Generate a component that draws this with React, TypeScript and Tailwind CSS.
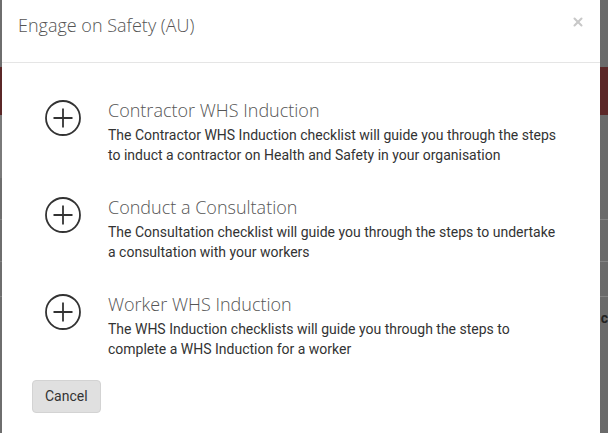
import { X } from "lucide-react";

const items = [
    {
        title: "Contractor WHS Induction",
        text: "The Contractor WHS Induction checklist will guide you through the steps to induct a contractor on Health and Safety in your organisation",
    },
    {
        title: "Conduct a Consultation",
        text: "The Consultation checklist will guide you through the steps to undertake a consultation with your workers",
    },
    {
        title: "Worker WHS Induction",
        text: "The WHS Induction checklists will guide you through the steps to complete a WHS Induction for a worker",
    },
];

const PlusCircle = () => (
    <svg width="36" height="36" viewBox="0 0 36 36" fill="none" stroke="#333" strokeWidth="1.8">
        <circle cx="18" cy="18" r="17" />
        <path d="M8.5 18h19M18 8.5v19" />
    </svg>
);

export default function App() {
    return (
        <div className="relative h-[433px] w-[608px] overflow-hidden bg-[#747474] font-['Roboto',sans-serif]">
            {/* Dimmed page behind the modal */}
            <div className="flex h-full flex-col bg-gradient-to-r from-[#6e6e6e] via-[#747474] to-[#6a6a6a]">
                <div className="h-[67px]" />
                <div className="h-[48px] bg-[#5b2727]" />
                <div className="h-[63px] border-l-[3px] border-[#7a7a7a]" />
                <div className="h-[42px] border-b border-[#838383]" />
                <div className="h-[42px] border-b border-[#838383]" />
                <div className="h-[35px] border-b border-[#838383]" />
                <div className="flex h-[42px] items-center justify-end text-[14px] font-bold text-[#222]">c</div>
            </div>

            {/* Modal */}
            <div className="absolute left-[2px] top-0 h-[460px] w-[598px] bg-white">
                <div className="flex h-[63px] items-start justify-between border-b border-[#e5e5e5] pl-[16px] pr-[15px]">
                    <h4 className="pt-[12px] font-['Open_Sans',sans-serif] text-[18px] font-light leading-[26px] text-[#555]">
                        Engage on Safety (AU)
                    </h4>
                    <button className="mt-[15px] text-[#c8c8c8]">
                        <X size={14} strokeWidth={3.5} />
                    </button>
                </div>

                <div className="flex flex-col gap-[32px] pl-[43px] pt-[37px]">
                    {items.map(item => (
                        <div key={item.title} className="flex gap-[27px]">
                            <div className="shrink-0">
                                <PlusCircle />
                            </div>
                            <div className="w-[455px]">
                                <div className="font-['Open_Sans',sans-serif] text-[18px] font-light leading-[20px] text-[#555]">
                                    {item.title}
                                </div>
                                <p className="mt-[5px] text-[14px] leading-[20px] text-[#333]">{item.text}</p>
                            </div>
                        </div>
                    ))}
                </div>

                <div className="pl-[30px] pt-[21px]">
                    <button className="h-[33px] rounded-[4px] border border-[#d3d3d3] bg-[#e0e0e0] px-[12px] text-[14px] text-[#333]">
                        Cancel
                    </button>
                </div>
            </div>
        </div>
    );
}
